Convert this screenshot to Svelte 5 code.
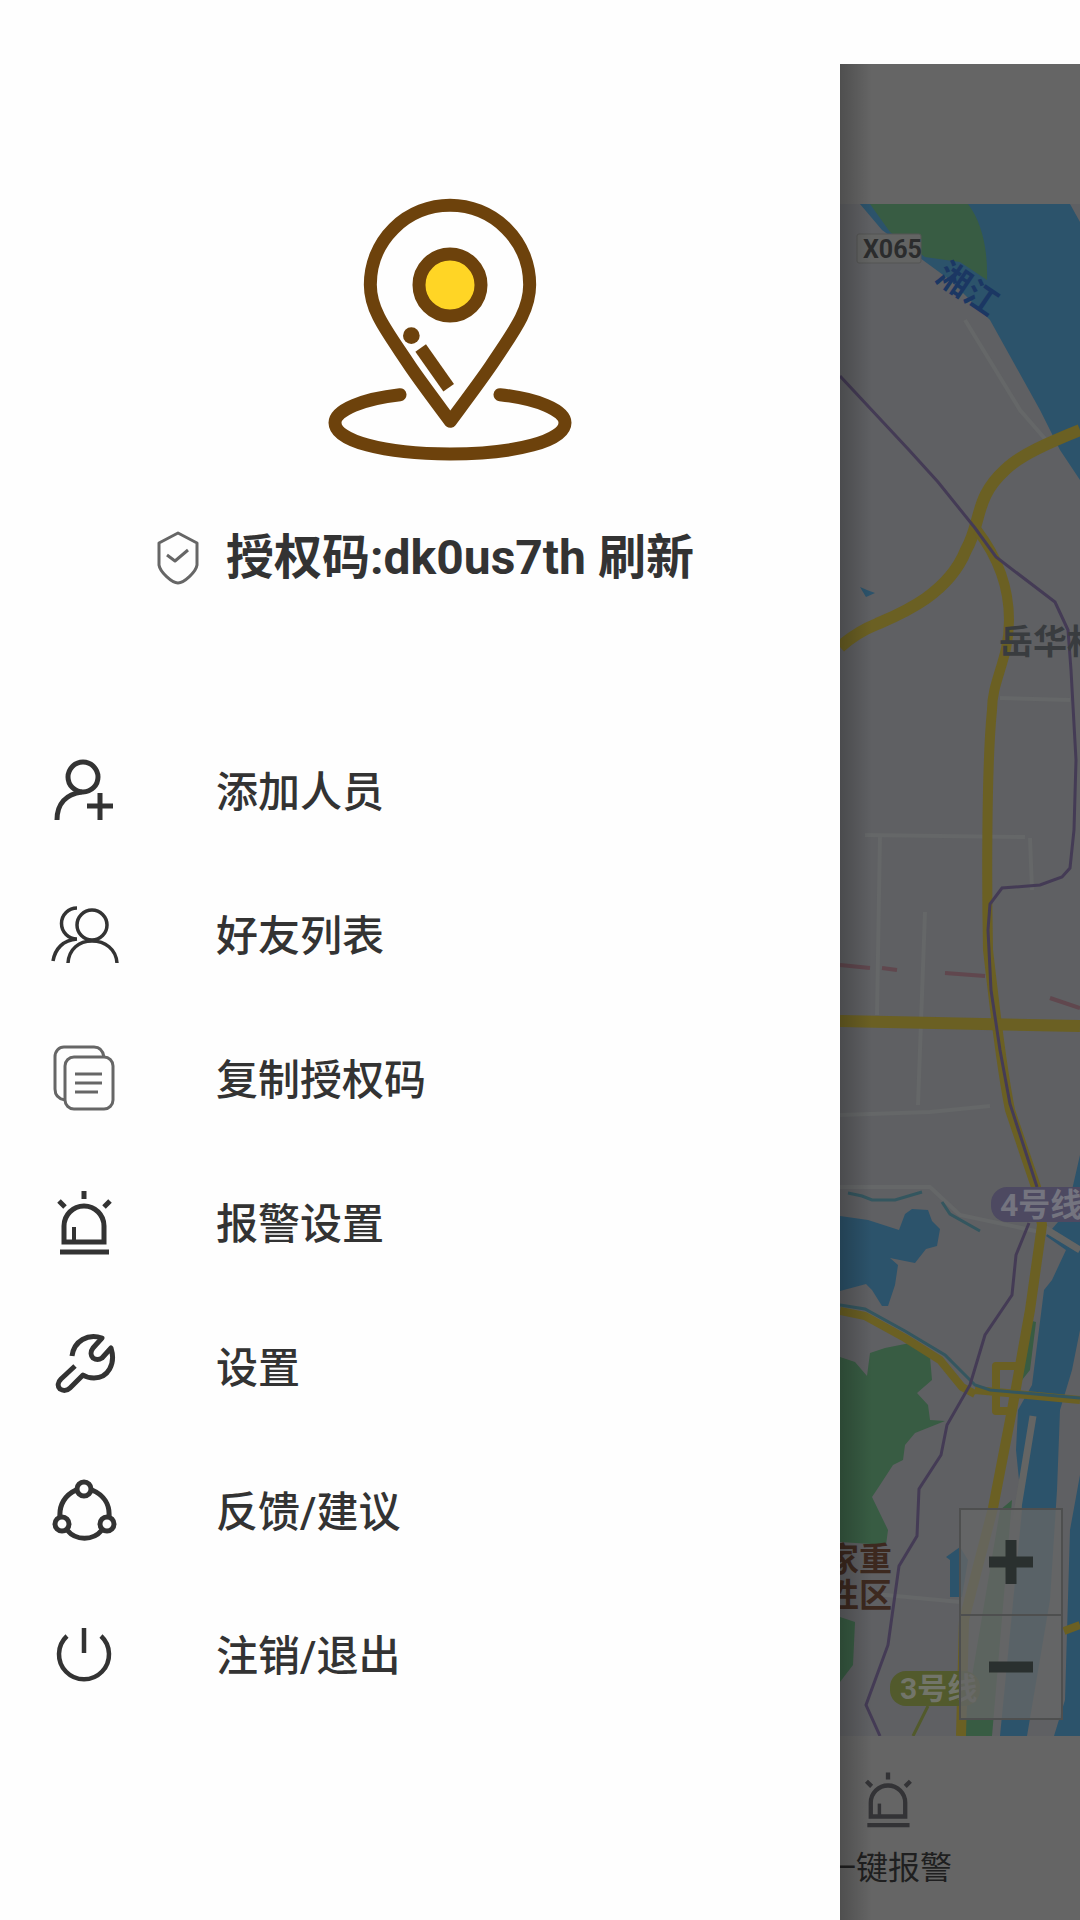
<script>
  const items = [
    { icon: 'add', label: '添加人员' },
    { icon: 'friends', label: '好友列表' },
    { icon: 'copy', label: '复制授权码' },
    { icon: 'siren', label: '报警设置' },
    { icon: 'wrench', label: '设置' },
    { icon: 'share', label: '反馈/建议' },
    { icon: 'power', label: '注销/退出' }
  ];
</script>

{#snippet siren()}
  <path stroke-width="5" d="M16 54V38a20 20 0 0 1 40 0v16z" />
  <path stroke-width="4" d="M26 39v15" />
  <path stroke-width="5" d="M12 64h49" />
  <path stroke-width="5" d="M36 3v8M11 13l6 6M62 13l-6 6" />
{/snippet}

<div class="app">
  <aside class="drawer">
    <header>
      <svg class="logo" viewBox="0 0 900 900" aria-hidden="true">
        <path d="M451 724C405 662 362 605 330 558C262 455 211 394 211 314A239 238 0 0 1 689 314C689 394 640 455 572 558C540 605 497 662 451 724Z" />
        <circle cx="450" cy="315" r="93" class="sun" />
        <circle cx="334" cy="467" r="25" class="dot" />
        <path d="M362 504 446 623" class="butt" />
        <path d="M300 644C190 656 105 690 105 728C105 782 250 822 450 822S795 782 795 728C795 690 710 656 600 644" />
      </svg>
      <div class="code">
        <svg class="shield" viewBox="0 0 48 60" aria-hidden="true">
          <path d="M24 5 43 15V37C42 44 30 55 24 55S6 44 5 37V15Z" />
          <path d="m13 27 8 6 13-11" />
        </svg>
        <h1>授权码:dk0us7th <button type="button">刷新</button></h1>
      </div>
    </header>

    <nav>
      {#each items as item}
        <button type="button" class="item">
          <svg viewBox="0 0 72 72" aria-hidden="true">
            {#if item.icon === 'add'}
              <g stroke-width="5">
                <circle cx="35" cy="21" r="15" />
                <path d="M9 64C9 48 18 38 34 36M39 50h26M52 37v27" />
              </g>
            {:else if item.icon === 'friends'}
              <g stroke-width="3.5">
                <circle cx="44" cy="25" r="15" />
                <path d="M20 63C21 49 31 41 44 41S68 49 69 63" />
                <path d="M29 8a15 15 0 0 0 0 31M5 61C7 49 15 40 29 39" />
              </g>
            {:else if item.icon === 'copy'}
              <g stroke-width="3" class="soft">
                <rect x="17" y="13" width="48" height="52" rx="9" />
                <path d="M56 13C55 7 52 3 46 3H16C11 3 7 7 7 13V45C7 52 11 55 17 56" />
                <path d="M27 30h27M27 39h27M27 48h23" />
              </g>
            {:else if item.icon === 'siren'}
              {@render siren()}
            {:else if item.icon === 'wrench'}
              <path
                stroke-width="5"
                stroke-linejoin="round"
                d="M24 24C26 9 40 1 54 6L45 16C42 20 43 24 45 26C48 28 51 28 54 26L63 16C68 32 60 46 46 46C41 46 38 45 35 43L22 56C19 59 15 59 12 57C9 54 10 50 13 47L27 34"
              />
            {:else if item.icon === 'share'}
              <g stroke-width="5">
                <circle cx="36" cy="13" r="7" />
                <circle cx="14" cy="48" r="7" />
                <circle cx="59" cy="48" r="7" />
                <path d="M28 14C17 19 11 29 12 41M44 14C56 19 62 29 61 41M19 54C28 65 45 65 54 54" />
              </g>
            {:else}
              <path stroke-width="4.5" d="M19 16A25 25 0 1 0 53 16M36 8v25" />
            {/if}
          </svg>
          <span>{item.label}</span>
        </button>
      {/each}
    </nav>
  </aside>

  <main class="page">
    <div class="topbar"></div>
    <div class="map">
      <svg class="canvas" viewBox="840 204 240 1532" role="img" aria-label="地图">
        <rect class="land" x="840" y="204" width="240" height="1532" />

        <g class="water">
          <path d="M860 204H1070L1080 222V480L1060 450 1040 410 1015 365 990 320 950 280 920 258 882 230Z" />
          <path d="M840 1216 868 1220 899 1230 905 1214 912 1209 928 1210 932 1221 940 1229 937 1246 926 1249 915 1263 890 1258 898 1265 895 1285 888 1306 882 1306 872 1290 866 1284 840 1291Z" />
          <path d="M1080 1155 1072 1190 1058 1222 1046 1236 1066 1250 1052 1280 1044 1290 1032 1385 1018 1410 1016 1450 1022 1510 1000 1736H1027L1050 1600 1057 1490 1060 1410 1072 1370 1080 1330Z" />
          <path d="M1080 1475 1070 1530 1065 1700 1054 1736H1080Z" />
          <path d="M946 1557 960 1547 968 1560 962 1597H950V1560Z" />
          <path d="M860 587 867 590 875 593 866 597Z" />
        </g>

        <g class="green">
          <path d="M870 204H968C982 222 988 250 987 280L960 262 925 257 890 232Z" />
          <path d="M840 1357 855 1362 867 1376 870 1353 885 1348 910 1343 930 1357 932 1380 917 1393 928 1405 930 1420 945 1421 915 1433 905 1445 903 1460 893 1465 880 1485 872 1497 888 1530 886 1545 840 1542Z" />
          <path d="M840 1617 855 1622 853 1665 840 1682Z" />
          <path d="M1028 1320 1036 1322 1030 1370 1022 1380ZM1000 1510 1012 1500 992 1736H962Z" />
        </g>

        <g class="minor">
          <path d="M880 835 877 1015M925 912 918 1105M865 835 1025 837M840 1115 930 1112 990 1106M1000 698 1070 700M1030 838 1032 890M965 320 1020 410 1046 440M840 1187 930 1187 960 1215 1040 1232M875 1594 960 1602" />
        </g>
        <g class="bank">
          <path d="M1044 1228 1080 1250M1033 1416 1016 1520" />
        </g>
        <path class="rail" d="M840 965 870 968M882 968 897 970M945 973 985 976M1050 998 1080 1008" />
        <path class="stream" d="M848 1193 862 1196 872 1200 895 1200 922 1192M942 1202 950 1214 980 1231" />

        <g class="road">
          <path d="M1080 430C1050 442 1020 455 1005 470C974 498 982 522 966 550C948 595 900 614 877 624C862 630 850 638 840 647" />
          <path class="thin" d="M977 530C1000 560 1009 590 1009 620C1009 660 992 680 992 710C986 770 987 900 988 950C994 1000 1000 1060 1010 1110L1036 1187 1042 1225 1030 1310 1012 1410 993 1508 964 1620 961 1736" />
          <path d="M840 1021 1080 1026" />
          <path class="slim" d="M840 1311 865 1316 905 1338 940 1360 962 1387 975 1394M975 1390 1080 1400M1024 1366H996V1411H1012M1064 1631 1080 1625" />
        </g>
        <path class="stream" d="M840 1305 865 1309 905 1331 945 1355 975 1385 990 1390 1080 1398" />
        <path class="olive" d="M928 1706 913 1736" />
        <path
          class="metro"
          d="M840 376 909 450 938 482 975 528 996 557 1055 602 1068 630 1071 670 1076 760 1074 830 1070 868 1062 877 1040 885 1002 888 990 904 988 930 991 990 1000 1050 1010 1104 1037 1187M1029 1223 1016 1255 1012 1295 985 1335 970 1385 947 1425 941 1455 919 1489 917 1536 899 1566 888 1645 866 1705 880 1736"
        />

        <rect class="plate" x="857" y="234" width="64" height="29" rx="2" />
        <text class="route" x="863" y="258">X065</text>
        <text class="river" transform="translate(934 280) rotate(34)">湘江</text>
        <text class="place" x="999" y="654">岳华村</text>
        <rect class="line4" x="991" y="1187" width="110" height="35" rx="16" />
        <text class="badge" x="1000" y="1216">4号线</text>
        <rect class="line3" x="890" y="1671" width="90" height="35" rx="16" />
        <text class="badge three" x="900" y="1699">3号线</text>
        <text class="poi" x="826" y="1571">家重</text>
        <text class="poi" x="826" y="1607">性区</text>
      </svg>

      <div class="zoom">
        <button type="button" aria-label="放大">
          <svg viewBox="0 0 44 44" aria-hidden="true"><path d="M0 22h44M22 0v44" /></svg>
        </button>
        <button type="button" aria-label="缩小">
          <svg viewBox="0 0 44 44" aria-hidden="true"><path d="M0 22h44" /></svg>
        </button>
      </div>
    </div>
    <footer>
      <button type="button" class="alarm">
        <svg viewBox="0 0 72 72" aria-hidden="true">{@render siren()}</svg>
        <span>一键报警</span>
      </button>
    </footer>
  </main>
</div>

<style>
  :global(body) {
    margin: 0;
    background: #fefefe;
  }

  .app {
    display: grid;
    grid-template-columns: 7fr 2fr;
    min-height: 100vh;
    overflow: hidden;
    color: #333;
    font-family: Roboto, 'Noto Sans CJK SC', sans-serif;
  }

  button {
    margin: 0;
    padding: 0;
    border: 0;
    background: none;
    color: inherit;
    font: inherit;
    cursor: pointer;
  }

  svg {
    display: block;
    flex: none;
    fill: none;
    stroke: #333;
  }

  .drawer {
    position: relative;
    z-index: 1;
    background: #fefefe;
  }

  header {
    display: flex;
    flex-direction: column;
    align-items: center;
    gap: 48px;
    padding: 180px 0 128px;
  }

  .logo {
    width: 300px;
    margin-left: 60px;
    stroke: #6d420c;
    stroke-width: 39;
    stroke-linecap: round;
    stroke-linejoin: round;
  }

  .sun {
    fill: #ffd525;
  }

  .dot {
    fill: #6d420c;
    stroke: none;
  }

  .butt {
    stroke-linecap: butt;
  }

  .code {
    display: flex;
    align-items: center;
    gap: 24px;
    height: 60px;
    padding: 0 0 4px 8px;
  }

  .shield {
    width: 48px;
    stroke: #666;
    stroke-width: 3;
    stroke-linejoin: round;
  }

  h1 {
    margin: 0;
    font-size: 48px;
    line-height: 64px;
    font-weight: 700;
    white-space: nowrap;
  }

  nav {
    display: flex;
    flex-direction: column;
  }

  .item {
    display: flex;
    align-items: center;
    gap: 96px;
    height: 144px;
    padding-left: 48px;
    font-size: 42px;
    font-weight: 500;
    text-align: left;
  }

  .item svg {
    width: 72px;
  }

  .item span {
    padding-bottom: 8px;
  }

  .soft {
    stroke: #666;
  }

  .page {
    position: relative;
    display: flex;
    flex-direction: column;
    min-width: 0;
    margin-top: 64px;
    background: #656565;
  }

  .page::after {
    content: '';
    position: absolute;
    inset: 0 auto 0 0;
    width: 32px;
    background: linear-gradient(to right, rgb(0 0 0 / 22%), transparent);
    pointer-events: none;
  }

  .topbar {
    height: 140px;
  }

  .map {
    position: relative;
  }

  .canvas {
    width: 100%;
    stroke: none;
  }

  .land {
    fill: #5f6063;
  }

  .water {
    fill: #2c536b;
  }

  .green {
    fill: #385c43;
  }

  .minor {
    fill: none;
    stroke: #656768;
    stroke-width: 4;
  }

  .bank {
    fill: none;
    stroke: #646564;
    stroke-width: 7;
  }

  .rail {
    fill: none;
    stroke: #60474e;
    stroke-width: 4;
  }

  .stream {
    fill: none;
    stroke: #34565f;
    stroke-width: 3;
  }

  .road {
    fill: none;
    stroke: #6b6023;
    stroke-width: 12;
    stroke-linejoin: round;
  }

  .thin {
    stroke-width: 10;
  }

  .slim {
    stroke-width: 8;
  }

  .olive {
    fill: none;
    stroke: #525a2c;
    stroke-width: 3;
  }

  .metro {
    fill: none;
    stroke: #443b55;
    stroke-width: 3;
  }

  .plate {
    fill: #636463;
    stroke: #545554;
    stroke-width: 1;
  }

  .route {
    fill: #2b2c2d;
    font-size: 25px;
    font-weight: 700;
  }

  .river {
    fill: #1b3763;
    font-size: 33px;
    font-weight: 700;
  }

  .place {
    fill: #393c3f;
    font-size: 34px;
    font-weight: 700;
  }

  .line4 {
    fill: #4d4961;
  }

  .line3 {
    fill: #525a2c;
  }

  .badge {
    fill: #74747f;
    font-size: 32px;
    font-weight: 700;
  }

  .three {
    fill: #72756a;
    font-size: 30px;
  }

  .poi {
    fill: #3d291f;
    font-size: 33px;
    font-weight: 700;
  }

  .zoom {
    position: absolute;
    right: 17px;
    bottom: 16px;
    display: flex;
    flex-direction: column;
    width: 104px;
    box-sizing: border-box;
    border: 2px solid #4e4f4f;
    background: rgb(101 102 103 / 80%);
  }

  .zoom button {
    display: flex;
    align-items: center;
    justify-content: center;
    height: 104px;
  }

  .zoom button + button {
    border-top: 2px solid #4e4f4f;
  }

  .zoom svg {
    width: 44px;
    stroke: #2a302f;
    stroke-width: 11;
  }

  footer {
    display: flex;
    flex: 1;
    min-height: 184px;
    align-items: flex-start;
  }

  .alarm {
    display: flex;
    flex-direction: column;
    align-items: center;
    gap: 12px;
    margin-left: -16px;
    padding-top: 34px;
    font-size: 32px;
    line-height: 48px;
    color: #1f1f20;
    white-space: nowrap;
  }

  .alarm svg {
    width: 62px;
    stroke: #333336;
  }
</style>
